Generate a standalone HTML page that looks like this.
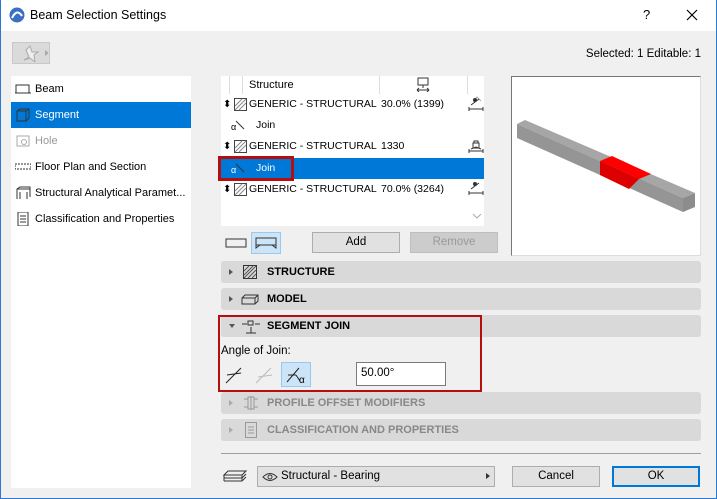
<!DOCTYPE html>
<html><head><style>
*{margin:0;padding:0;box-sizing:border-box}
body{width:717px;height:499px;background:#f0f0f0;font-family:"Liberation Sans",sans-serif;font-size:12px;color:#000;position:relative;overflow:hidden}
.a{position:absolute}
.tb{left:0;top:0;width:717px;height:31px;background:#fff}
.lp{left:11px;top:76px;width:180px;height:412px;background:#fff}
.li{position:absolute;left:0;width:180px;height:26px;line-height:26px;padding-left:24px;font-size:11px;white-space:nowrap;overflow:hidden;text-overflow:ellipsis}
.li svg{position:absolute;left:4px;top:6px}
.row{position:absolute;left:0;width:263px;height:21px;line-height:21px;font-size:10.5px;white-space:nowrap}
.sec{position:absolute;left:221px;width:480px;height:22px;background:#d9d9d9;border-radius:3px;font-weight:bold;font-size:11px;line-height:22px;padding-left:46px}
.sec .tri{position:absolute;left:8px;top:8px;width:0;height:0;border-left:4px solid #555;border-top:3.5px solid transparent;border-bottom:3.5px solid transparent}
.btn{position:absolute;height:21px;background:#e1e1e1;border:1px solid #adadad;text-align:center;line-height:19px;font-size:11.5px}
</style></head><body>
<div class="a tb"></div>
<svg class="a" style="left:9px;top:7px" width="16" height="16"><circle cx="8" cy="8" r="7.5" fill="#3a6fc4"/><path d="M3 11 Q8 1 13 9" stroke="#fff" stroke-width="2" fill="none"/></svg>
<div class="a" style="left:30px;top:8px;font-size:12.5px">Beam Selection Settings</div>
<div class="a" style="left:643px;top:7px;font-size:13px">?</div>
<svg class="a" style="left:686px;top:9px" width="12" height="12"><path d="M1 1L11 11M11 1L1 11" stroke="#000" stroke-width="1.2"/></svg>
<div class="a" style="left:716px;top:0;width:1px;height:499px;background:#2b79d6"></div>
<div class="a" style="left:0;top:498px;width:717px;height:1px;background:#2b79d6"></div>
<div class="a" style="left:0;top:0;width:1px;height:499px;background:#2b79d6"></div>
<div class="a" style="left:12px;top:42px;width:38px;height:22px;background:#dadada;border:1px solid #c8c8c8"></div>
<svg class="a" style="left:16px;top:44px" width="32" height="18"><path d="M10 6l3 7 -5 3 6-2 5 4-1-7 4-3-6 0-2-6z" fill="#eee" stroke="#aaa"/><path d="M29 6l4 3-4 3z" fill="#aaa"/></svg>
<div class="a" style="right:16px;top:48px;font-size:11.5px">Selected: 1 Editable: 1</div>
<div class="a lp">
<div class="li" style="top:0"><svg width="16" height="14"><rect x="1" y="3" width="13" height="8" fill="none" stroke="#333"/><path d="M0 11h16" stroke="#333"/></svg>Beam</div>
<div class="li" style="top:26px;background:#0078d7;color:#fff"><svg width="16" height="14"><path d="M2 3l3-2h9v9l-3 3H2z M2 3h9v10 M11 3l3-2" fill="none" stroke="#333"/></svg>Segment</div>
<div class="li" style="top:52px;color:#999"><svg width="16" height="14"><rect x="2" y="2" width="12" height="10" fill="none" stroke="#aaa"/><circle cx="9" cy="8" r="2.5" fill="none" stroke="#aaa"/></svg>Hole</div>
<div class="li" style="top:78px"><svg width="16" height="14"><rect x="0" y="4" width="16" height="5" fill="none" stroke="#333" stroke-dasharray="2 1"/></svg>Floor Plan and Section</div>
<div class="li" style="top:104px"><svg width="16" height="14"><path d="M2 13V3l3-2h10v10M2 3h13M5 13V6M12 13V6" fill="none" stroke="#333"/></svg>Structural Analytical Paramet...</div>
<div class="li" style="top:130px"><svg width="16" height="14"><rect x="3" y="0" width="10" height="14" fill="none" stroke="#333"/><path d="M5 4h6M5 7h6M5 10h6" stroke="#333"/></svg>Classification and Properties</div>
</div>
<div class="a" style="left:221px;top:76px;width:263px;height:150px;background:#fff">
<div class="a" style="left:8px;top:0;width:1px;height:18px;background:#ddd"></div>
<div class="a" style="left:21px;top:0;width:1px;height:18px;background:#ddd"></div>
<div class="a" style="left:158px;top:0;width:1px;height:18px;background:#ddd"></div>
<div class="a" style="left:246px;top:0;width:1px;height:18px;background:#ddd"></div>
<div class="a" style="left:28px;top:3px;font-size:11px">Structure</div>
<svg class="a" style="left:195px;top:1px" width="14" height="15"><rect x="2" y="1" width="10" height="7" fill="none" stroke="#333"/><path d="M7 8v3M1 13h12M1 13l2-2M1 13l2 2M13 13l-2-2M13 13l-2 2" stroke="#333" fill="none"/></svg>
<div class="row" style="top:18px"><span class="a" style="left:2px;font-size:10px">⬍</span><svg class="a" style="left:13px;top:4px" width="13" height="13"><rect x=".5" y=".5" width="12" height="12" fill="none" stroke="#444"/><path d="M1 8l7-7M1 12l11-11M5 12l7-7" stroke="#888"/></svg><span class="a" style="left:28px">GENERIC - STRUCTURAL</span><span class="a" style="left:160px">30.0% (1399)</span></div>
<div class="row" style="top:39px"><span class="a" style="left:10px;font-size:9px;top:2px">α</span><svg class="a" style="left:14px;top:5px" width="10" height="10"><path d="M1 1l8 8" stroke="#333"/></svg><span class="a" style="left:35px">Join</span></div>
<div class="row" style="top:60px"><span class="a" style="left:2px;font-size:10px">⬍</span><svg class="a" style="left:13px;top:4px" width="13" height="13"><rect x=".5" y=".5" width="12" height="12" fill="none" stroke="#444"/><path d="M1 8l7-7M1 12l11-11M5 12l7-7" stroke="#888"/></svg><span class="a" style="left:28px">GENERIC - STRUCTURAL</span><span class="a" style="left:160px">1330</span></div>
<div class="row" style="top:82px;background:#0078d7;color:#fff"><span class="a" style="left:10px;font-size:9px;top:2px">α</span><svg class="a" style="left:14px;top:5px" width="10" height="10"><path d="M1 1l8 8" stroke="#333"/></svg><span class="a" style="left:35px">Join</span></div>
<div class="row" style="top:103px"><span class="a" style="left:2px;font-size:10px">⬍</span><svg class="a" style="left:13px;top:4px" width="13" height="13"><rect x=".5" y=".5" width="12" height="12" fill="none" stroke="#444"/><path d="M1 8l7-7M1 12l11-11M5 12l7-7" stroke="#888"/></svg><span class="a" style="left:28px">GENERIC - STRUCTURAL</span><span class="a" style="left:160px">70.0% (3264)</span></div>
</div>
<svg class="a" style="left:470px;top:94px" width="14" height="16"><path d="M3 7l4-4 4 4" stroke="#aaa" fill="none"/></svg>
<svg class="a" style="left:470px;top:210px" width="14" height="16"><path d="M3 4l4 4 4-4" stroke="#aaa" fill="none"/></svg>
<svg class="a" style="left:468px;top:97px" width="16" height="14"><circle cx="7" cy="3" r="2" fill="#333"/><path d="M3 8l8-6M1 12h14M1 10v4M15 10v4" stroke="#333" fill="none"/></svg>
<svg class="a" style="left:468px;top:139px" width="16" height="14"><rect x="5" y="4" width="6" height="5" fill="none" stroke="#333"/><path d="M6 4V2h4v2M3 10l5-2 5 2M1 12h14M1 10v4M15 10v4" stroke="#333" fill="none"/></svg>
<svg class="a" style="left:468px;top:181px" width="16" height="14"><circle cx="7" cy="3" r="2" fill="#333"/><path d="M3 8l8-6M1 12h14M1 10v4M15 10v4" stroke="#333" fill="none"/></svg>
<div class="a" style="left:218px;top:156px;width:76px;height:25px;border:3px solid #b50e0e"></div>
<svg class="a" style="left:224px;top:236px" width="24" height="14"><rect x="2" y="3" width="20" height="8" fill="none" stroke="#333"/></svg>
<div class="a" style="left:251px;top:232px;width:30px;height:22px;background:#cce4f7;border:1px solid #99c9ef"></div>
<svg class="a" style="left:254px;top:236px" width="24" height="14"><path d="M2 2h20v10l-4-3H6l-4 3z M2 9h20" fill="none" stroke="#333"/></svg>
<div class="btn" style="left:312px;top:232px;width:88px">Add</div>
<div class="btn" style="left:410px;top:232px;width:88px;color:#999;background:#ccc;border-color:#bfbfbf">Remove</div>
<div class="a" style="left:511px;top:76px;width:190px;height:180px;background:#fff;border-top:1px solid #777;border-left:1px solid #777;border-right:1px solid #ddd;border-bottom:1px solid #ddd"></div>
<svg class="a" style="left:511px;top:76px" width="190" height="180">
<polygon points="14,44 6,48 172,122 184,117" fill="#a6a6a6"/>
<polygon points="6,48 6,62 172,136 172,122" fill="#959595"/>
<polygon points="172,122 184,117 184,131 172,136" fill="#8c8c8c"/>
<polygon points="89,85 101,80 140,98 128,103" fill="#f00"/>
<polygon points="89,85 89,99 118,113 128,103" fill="#d00"/>
</svg>
<div class="sec" style="top:261px"><span class="tri"></span><svg class="a" style="left:22px;top:4px" width="14" height="14"><rect x=".5" y=".5" width="13" height="13" fill="none" stroke="#333"/><path d="M1 6l5-5M1 10l9-9M1 13l12-12M5 13l8-8M9 13l4-4" stroke="#555"/></svg>STRUCTURE</div>
<div class="sec" style="top:288px"><span class="tri"></span><svg class="a" style="left:20px;top:5px" width="18" height="12"><path d="M1 5l3-3h13v6l-3 3H1z M1 5h13v6 M14 5l3-3" fill="none" stroke="#333"/></svg>MODEL</div>
<div class="sec" style="top:315px"><span class="tri" style="border-left:3.5px solid transparent;border-right:3.5px solid transparent;border-top:4px solid #555;border-bottom:0;top:9px"></span><svg class="a" style="left:20px;top:3px" width="20" height="16"><path d="M1 6h5M14 6h5M10 9v6M5 15h10M7 3h5v4H7z" fill="none" stroke="#333"/></svg>SEGMENT JOIN</div>
<div class="a" style="left:221px;top:345px;font-size:11.5px">Angle of Join:</div>
<svg class="a" style="left:224px;top:364px" width="22" height="22"><path d="M2 19L17 4M3 11l14-2" stroke="#222" fill="none"/></svg>
<svg class="a" style="left:254px;top:364px" width="22" height="22"><path d="M2 19L17 4M4 13l14-2" stroke="#bbb" fill="none"/></svg>
<div class="a" style="left:281px;top:362px;width:30px;height:25px;background:#cce4f7;border:1px solid #99c9ef"></div>
<svg class="a" style="left:284px;top:364px" width="26" height="22"><path d="M3 18L15 4M4 11l8 0M12 11l4 6" stroke="#222" fill="none"/><text x="15" y="19" font-size="10" font-family="Liberation Sans">α</text></svg>
<div class="a" style="left:356px;top:362px;width:90px;height:24px;background:#fff;border:1px solid #7a7a7a;padding:4px 4px;font-size:11.5px">50.00°</div>
<div class="a" style="left:218px;top:315px;width:264px;height:77px;border:2px solid #b50e0e"></div>
<div class="sec" style="top:392px;color:#888"><span class="tri" style="border-left-color:#aaa"></span><svg class="a" style="left:22px;top:3px" width="16" height="16"><path d="M1 4h4M11 4h4M1 12h4M11 12h4M5 2h6v12H5zM8 1v14" fill="none" stroke="#999"/></svg>PROFILE OFFSET MODIFIERS</div>
<div class="sec" style="top:419px;color:#888"><span class="tri" style="border-left-color:#aaa"></span><svg class="a" style="left:24px;top:3px" width="12" height="16"><rect x=".5" y=".5" width="11" height="15" fill="none" stroke="#999"/><path d="M3 5h6M3 8h6M3 11h6" stroke="#999"/></svg>CLASSIFICATION AND PROPERTIES</div>
<div class="a" style="left:221px;top:453px;width:480px;height:1px;background:#a0a0a0"></div>
<svg class="a" style="left:222px;top:467px" width="26" height="18"><path d="M2 8h18l4-4H6zM2 11h18l4-4M2 14h18l4-4M2 8v6M20 8v6" fill="none" stroke="#333"/></svg>
<div class="a" style="left:257px;top:466px;width:238px;height:21px;background:#e1e1e1;border:1px solid #adadad"></div>
<svg class="a" style="left:262px;top:472px" width="16" height="10"><path d="M1 5Q8-2 15 5Q8 12 1 5z" fill="none" stroke="#333"/><circle cx="8" cy="5" r="2" fill="none" stroke="#333"/></svg>
<div class="a" style="left:281px;top:470px;font-size:11.5px">Structural - Bearing</div>
<div class="a" style="left:486px;top:473px;border-left:4px solid #333;border-top:3.5px solid transparent;border-bottom:3.5px solid transparent"></div>
<div class="btn" style="left:512px;top:466px;width:88px">Cancel</div>
<div class="btn" style="left:612px;top:466px;width:88px;border:2px solid #0078d7;line-height:17px">OK</div>
</body></html>
